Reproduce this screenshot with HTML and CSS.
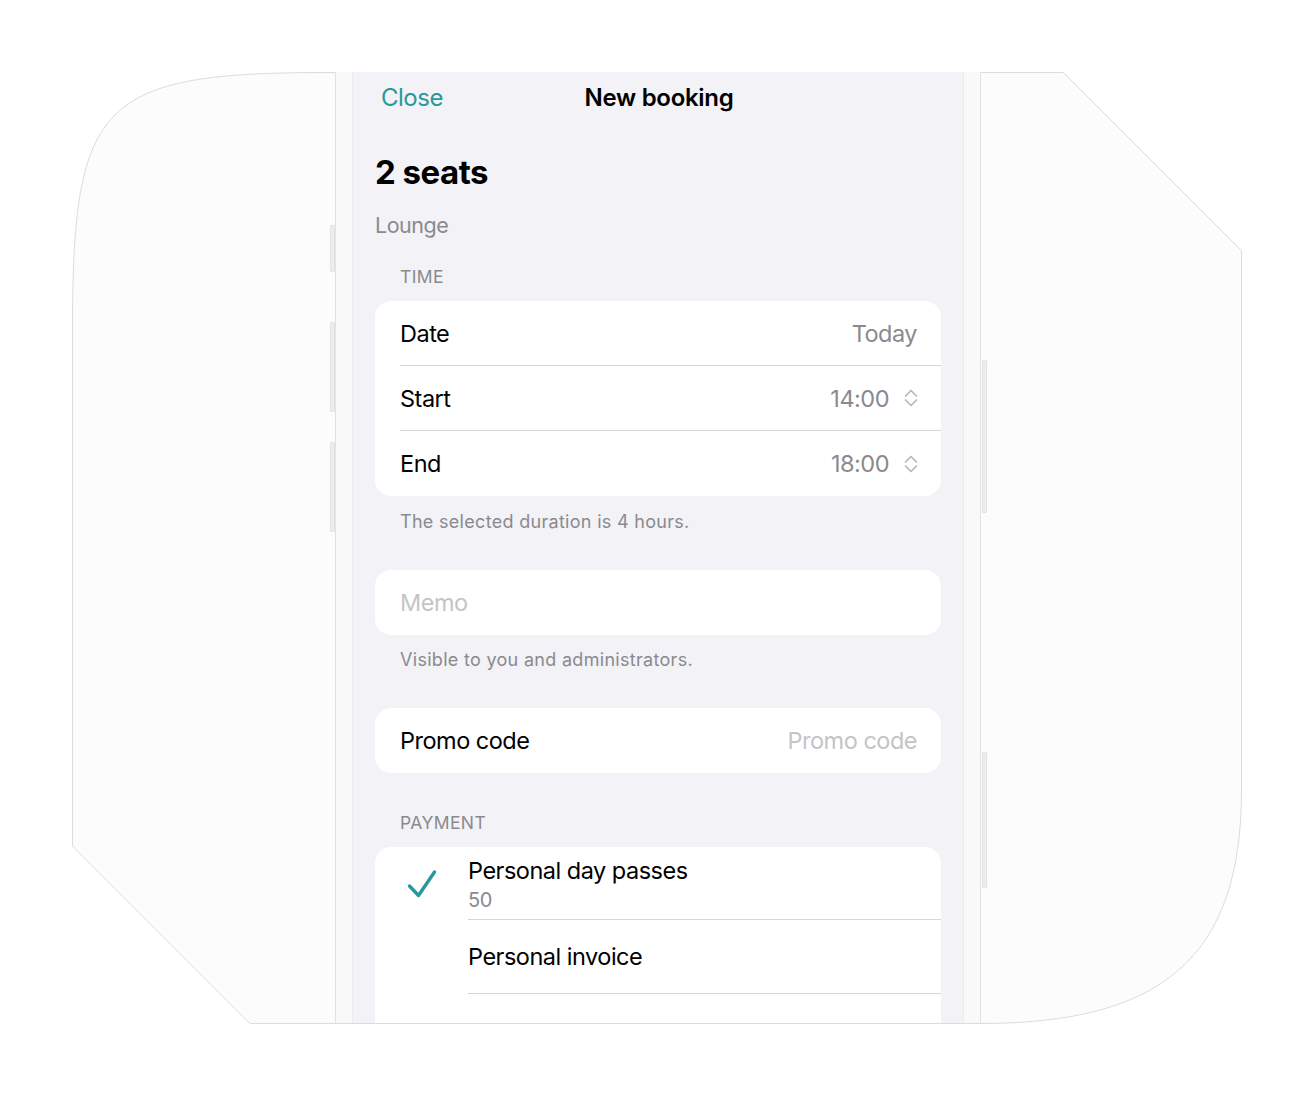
FILE: index.html
```html
<!DOCTYPE html>
<html lang="en">
<head>
<meta charset="utf-8">
<title>New booking</title>
<link rel="stylesheet" href="styles.css">
</head>
<body>
<div class="stage">
  <svg class="backdrop" width="1314" height="1096" viewBox="0 0 1314 1096" aria-hidden="true">
    <path d="M330 72.5 L1063.5 72.5 L1241.5 250.5 L1241.5 790 C1241.5 960 1160 1023.5 980 1023.5 L250 1023.5 L72.5 846 L72.5 330 C72.5 100 100 72.5 330 72.5 Z" fill="#fcfcfc" stroke="#dcdcdc" stroke-width="1"/>
  </svg>
  <div class="phone">
    <span class="side-btn left b1"></span>
    <span class="side-btn left b2"></span>
    <span class="side-btn left b3"></span>
    <span class="side-btn right b4"></span>
    <span class="side-btn right b5"></span>
    <div class="screen">
      <header class="nav">
        <span class="nav-close">Close</span>
        <span class="nav-title">New booking</span>
        <span class="nav-spacer"></span>
      </header>
      <h1 class="seats">2 seats</h1>
      <p class="location">Lounge</p>

      <div class="section-label">TIME</div>
      <div class="card">
        <div class="row">
          <span class="label">Date</span>
          <span class="value">Today</span>
        </div>
        <div class="row">
          <span class="label">Start</span>
          <span class="value">14:00
            <svg class="stepper" width="16" height="20" viewBox="0 0 16 20" aria-hidden="true"><path d="M2.5 8 L8 2.5 L13.5 8 M2.5 12 L8 17.5 L13.5 12" fill="none" stroke="#b8b8bc" stroke-width="1.7" stroke-linecap="round" stroke-linejoin="round"/></svg>
          </span>
        </div>
        <div class="row">
          <span class="label">End</span>
          <span class="value">18:00
            <svg class="stepper" width="16" height="20" viewBox="0 0 16 20" aria-hidden="true"><path d="M2.5 8 L8 2.5 L13.5 8 M2.5 12 L8 17.5 L13.5 12" fill="none" stroke="#b8b8bc" stroke-width="1.7" stroke-linecap="round" stroke-linejoin="round"/></svg>
          </span>
        </div>
      </div>
      <p class="footnote">The selected duration is 4 hours.</p>

      <div class="card card-memo">
        <div class="row">
          <span class="placeholder">Memo</span>
        </div>
      </div>
      <p class="footnote">Visible to you and administrators.</p>

      <div class="card card-promo">
        <div class="row">
          <span class="label">Promo code</span>
          <span class="placeholder">Promo code</span>
        </div>
      </div>

      <div class="section-label section-payment">PAYMENT</div>
      <div class="card card-pay">
        <div class="pay-row">
          <span class="pay-check">
            <svg width="30" height="30" viewBox="0 0 30 30" aria-hidden="true"><polyline points="2.5,17 11.5,26.5 27.5,3" fill="none" stroke="#28999a" stroke-width="3.4" stroke-linecap="round" stroke-linejoin="round"/></svg>
          </span>
          <span class="pay-text two-line">
            <span class="pay-name">Personal day passes</span>
            <span class="pay-sub">50</span>
          </span>
        </div>
        <div class="pay-row">
          <span class="pay-check"></span>
          <span class="pay-text">
            <span class="pay-name">Personal invoice</span>
          </span>
        </div>
        <div class="pay-row pay-empty">
          <span class="pay-check"></span>
          <span class="pay-text"></span>
        </div>
      </div>
    </div>
  </div>
</div>
</body>
</html>
```

FILE: styles.css
```css
* { box-sizing: border-box; }

html, body {
  margin: 0;
  padding: 0;
  background: #ffffff;
}

body {
  font-family: "Inter", "Noto Sans", "Liberation Sans", sans-serif;
  color: #000;
  overflow: hidden;
}

.stage {
  position: relative;
  width: 1314px;
  height: 1096px;
  padding-top: 72px;
  display: flex;
  justify-content: center;
  align-items: flex-start;
}

.backdrop {
  position: absolute;
  left: 0;
  top: 0;
  z-index: 0;
}

.phone {
  position: relative;
  z-index: 1;
  width: 646px;
  height: 951px;
  margin-left: 2px;
  padding: 0 16px;
  background: #f9f9f9;
  border-left: 1px solid #e2e2e2;
  border-right: 1px solid #e2e2e2;
}

.side-btn {
  position: absolute;
  width: 5px;
  background: #ededed;
  border: 1px solid #e3e3e3;
  border-radius: 1px;
}
.side-btn.left { left: -6px; }
.side-btn.right { right: -7px; }
.b1 { top: 153px; height: 47px; }
.b2 { top: 250px; height: 90px; }
.b3 { top: 370px; height: 90px; }
.b4 { top: 288px; height: 153px; }
.b5 { top: 680px; height: 136px; }

.screen {
  height: 100%;
  overflow: hidden;
  background: #f2f2f7;
  border-left: 1px solid #ebebeb;
  border-right: 1px solid #ebebeb;
  padding: 0 22px 0 22px;
  letter-spacing: -0.5px;
}

/* nav */
.nav {
  height: 52px;
  display: grid;
  grid-template-columns: 1fr auto 1fr;
  align-items: center;
  padding-left: 6px;
}
.nav-close {
  font-size: 24px;
  line-height: 30px;
  color: #28999a;
}
.nav-title {
  font-size: 24px;
  line-height: 30px;
  font-weight: 600;
  margin-left: -4px;
  letter-spacing: -0.3px;
}

.seats {
  margin: 28px 0 0;
  font-size: 33px;
  line-height: 40px;
  font-weight: 700;
  letter-spacing: -0.5px;
}

.location {
  margin: 18.5px 0 0;
  font-size: 21.5px;
  line-height: 28px;
  color: #8a8a8e;
}

.section-label {
  margin-top: 27.5px;
  padding-left: 25px;
  font-size: 17.5px;
  line-height: 22px;
  color: #8a8a8e;
  letter-spacing: 0.4px;
}
.section-payment { margin-top: 39px; }

.card {
  margin-top: 13px;
  background: #ffffff;
  border-radius: 16px;
  overflow: hidden;
}
.card-memo, .card-promo { margin-top: 37px; }

.row {
  height: 65px;
  margin-left: 25px;
  padding-right: 24px;
  display: flex;
  align-items: center;
  justify-content: space-between;
  border-bottom: 1px solid #d6d6da;
  font-size: 23.5px;
}
.row:last-child { border-bottom: none; }

.label { color: #000; }
.value {
  color: #8a8a8e;
  display: flex;
  align-items: center;
  gap: 14px;
}
.stepper { display: block; margin-right: -2px; }
.placeholder { color: #c4c4c7; }

.footnote {
  margin: 14.5px 0 0;
  padding-left: 25px;
  font-size: 18px;
  line-height: 22px;
  color: #8a8a8e;
  letter-spacing: 0.3px;
}

/* payment */
.pay-row {
  display: grid;
  grid-template-columns: 93px 1fr;
}
.pay-check {
  display: flex;
  align-items: center;
  justify-content: center;
}
.pay-check svg { display: block; }
.pay-text {
  display: flex;
  flex-direction: column;
  justify-content: center;
  border-bottom: 1px solid #d6d6da;
  height: 74px;
}
.pay-text.two-line {
  height: 73px;
  justify-content: flex-start;
  padding-top: 9px;
}
.pay-name {
  font-size: 23.5px;
  line-height: 30px;
}
.pay-sub {
  font-size: 20px;
  line-height: 29px;
  color: #8a8a8e;
}
.pay-empty .pay-text { border-bottom: none; height: 80px; }
```
